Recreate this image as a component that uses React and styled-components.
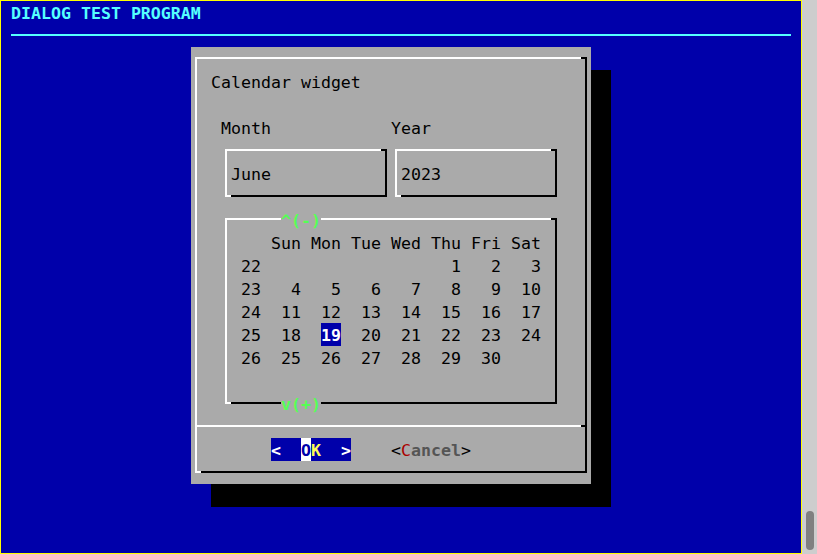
import styled, { createGlobalStyle, css } from "styled-components";

const BLUE = "#0000aa";
const GRAY = "#aaaaaa";

const GlobalStyle = createGlobalStyle`
  html, body {
    margin: 0;
    padding: 0;
    background: #cdcdcd;
  }
  body {
    font-family: "DejaVu Sans Mono", "Liberation Mono", monospace;
    font-size: 16.6px;
    line-height: 23px;
  }
`;

// place an item on the character grid (0-based col/row)
const place = css`
  grid-column: ${(p) => p.$c + 1} / span ${(p) => p.$w || 1};
  grid-row: ${(p) => p.$r + 1} / span ${(p) => p.$h || 1};
`;

// terminal glyphs sit one pixel lower in their cell
const glyph = css`
  box-sizing: border-box;
  padding-top: 1px;
`;

// a highlighted cell fills the whole row height
const block = css`
  display: inline-block;
  vertical-align: top;
  height: 23px;
  margin-top: -1px;
  padding-top: 1px;
  box-sizing: border-box;
`;

const Window = styled.div`
  display: flex;
  width: 817px;
  height: 554px;
`;

const Screen = styled.div`
  display: grid;
  grid-template-columns: repeat(80, 10px);
  grid-template-rows: repeat(24, 23px);
  border: 1px solid #ffff00;
  background: ${BLUE};
  white-space: pre;
  overflow: hidden;
`;

const Scrollbar = styled.div`
  width: 15px;
  display: flex;
  flex-direction: column;
  justify-content: flex-end;
  align-items: center;
  padding-bottom: 4px;
  box-sizing: border-box;
  background: #cdcdcd;
`;

const Thumb = styled.div`
  width: 8px;
  height: 39px;
  border-radius: 4px;
  background: #808080;
`;

const Title = styled.div`
  ${place}
  ${glyph}
  color: #55ffff;
  font-weight: bold;
`;

const Rule = styled.div`
  ${place}
  height: 2px;
  margin-top: 10px;
  background: #55ffff;
`;

const Shadow = styled.div`
  ${place}
  background: #000;
`;

const Dialog = styled.div`
  ${place}
  display: grid;
  grid-template-columns: repeat(40, 10px);
  grid-template-rows: repeat(19, 23px);
  background: ${GRAY};
  color: #000;
`;

const Frame = styled.div`
  ${place}
  position: relative;
  margin: 10px 4px 11px 4px;
  border: 2px solid;
  border-color: #fff #000 #000 #fff;

  &::before {
    content: "";
    position: absolute;
    top: -2px;
    right: -2px;
    width: 6px;
    height: 2px;
    background: #000;
  }
  &::after {
    content: "";
    position: absolute;
    bottom: -2px;
    left: -2px;
    width: 6px;
    height: 2px;
    background: #fff;
  }
`;

const Separator = styled.div`
  ${place}
  height: 2px;
  margin: 10px 4px 0 4px;
  background: linear-gradient(to right, #fff calc(100% - 6px), #000 0);
`;

const Text = styled.div`
  ${place}
  ${glyph}
`;

const Arrow = styled.div`
  ${place}
  ${glyph}
  position: relative;
  background: ${GRAY};
  color: #55ff55;
  font-weight: bold;
`;

const Month = styled.div`
  ${place}
  display: grid;
  grid-template-columns: 20px repeat(7, 40px);
  grid-auto-rows: 23px;
  text-align: right;
`;

const Day = styled.div`
  ${glyph}
`;

const Selected = styled.span`
  ${block}
  background: ${BLUE};
  color: #fff;
  font-weight: bold;
`;

const OkButton = styled.div`
  ${place}
  ${glyph}
  background: ${BLUE};
  color: #fff;
  font-weight: bold;
`;

const Cursor = styled.span`
  ${block}
  background: #fff;
  color: ${BLUE};
`;

const HotKey = styled.span`
  color: ${(p) => p.$color};
`;

const CancelButton = styled.div`
  ${place}
  ${glyph}
  color: #000;
`;

const Dim = styled.span`
  color: #555555;
  font-weight: bold;
`;

const DAYS = ["Sun", "Mon", "Tue", "Wed", "Thu", "Fri", "Sat"];

const WEEKS = [
  [22, [null, null, null, null, 1, 2, 3]],
  [23, [4, 5, 6, 7, 8, 9, 10]],
  [24, [11, 12, 13, 14, 15, 16, 17]],
  [25, [18, 19, 20, 21, 22, 23, 24]],
  [26, [25, 26, 27, 28, 29, 30, null]],
];

const SELECTED = 19;

export default function App() {
  return (
    <Window>
      <GlobalStyle />
      <Screen>
        <Title $c={1} $r={0} $w={19}>DIALOG TEST PROGRAM</Title>
        <Rule $c={1} $r={1} $w={78} />
        <Shadow $c={21} $r={3} $w={40} $h={19} />
        <Dialog $c={19} $r={2} $w={40} $h={19}>
          <Frame $c={0} $r={0} $w={40} $h={19} />
          <Text $c={2} $r={1} $w={15}>Calendar widget</Text>

          <Text $c={3} $r={3} $w={5}>Month</Text>
          <Text $c={20} $r={3} $w={4}>Year</Text>
          <Frame $c={3} $r={4} $w={17} $h={3} />
          <Text $c={4} $r={5} $w={4}>June</Text>
          <Frame $c={20} $r={4} $w={17} $h={3} />
          <Text $c={21} $r={5} $w={4}>2023</Text>

          <Frame $c={3} $r={7} $w={34} $h={9} />
          <Arrow $c={9} $r={7} $w={4}>^(-)</Arrow>
          <Month $c={5} $r={8} $w={30} $h={6}>
            <Day />
            {DAYS.map((d) => (
              <Day key={d}>{d}</Day>
            ))}
            {WEEKS.map(([wk, days]) => [
              <Day key={`w${wk}`}>{wk}</Day>,
              ...days.map((d, i) => (
                <Day key={`${wk}-${i}`}>
                  {d === SELECTED ? <Selected>{d}</Selected> : d}
                </Day>
              )),
            ])}
          </Month>
          <Arrow $c={9} $r={15} $w={4}>v(+)</Arrow>

          <Separator $c={0} $r={16} $w={40} />

          <OkButton $c={8} $r={17} $w={8}>
            {"<  "}
            <Cursor>O</Cursor>
            <HotKey $color="#ffff55">K</HotKey>
            {"  >"}
          </OkButton>
          <CancelButton $c={20} $r={17} $w={8}>
            {"<"}
            <HotKey $color="#aa0000">C</HotKey>
            <Dim>ancel</Dim>
            {">"}
          </CancelButton>
        </Dialog>
      </Screen>
      <Scrollbar>
        <Thumb />
      </Scrollbar>
    </Window>
  );
}
